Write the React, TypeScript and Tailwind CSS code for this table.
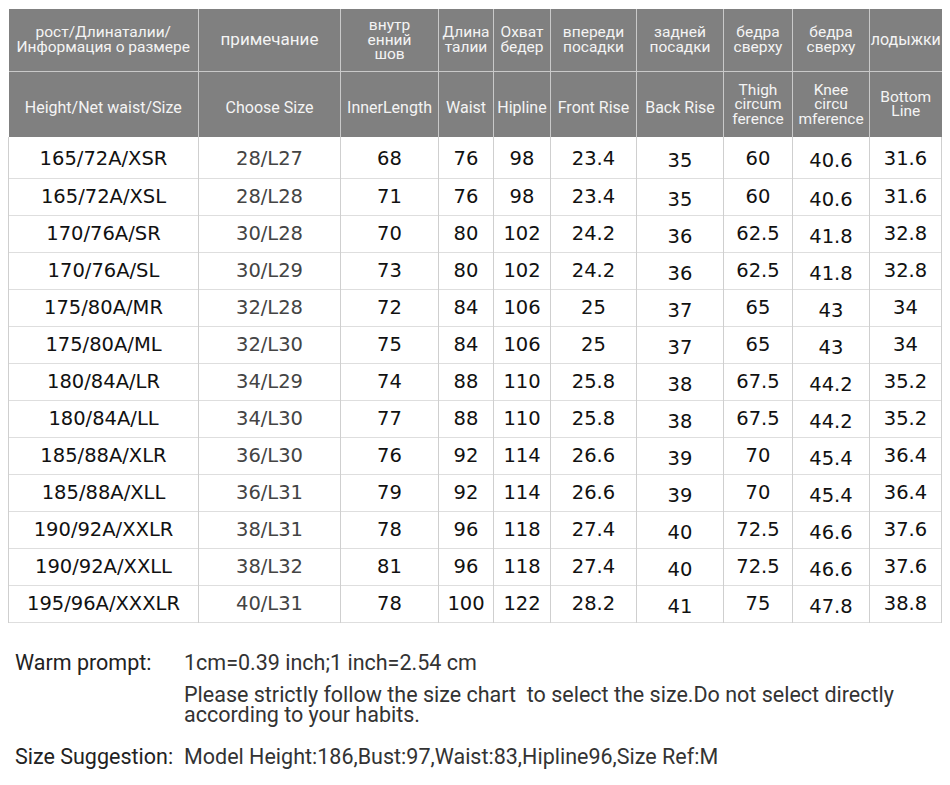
import React from "react";

const rows: string[][] = [
  ["165/72A/XSR", "28/L27", "68", "76", "98", "23.4", "35", "60", "40.6", "31.6"],
  ["165/72A/XSL", "28/L28", "71", "76", "98", "23.4", "35", "60", "40.6", "31.6"],
  ["170/76A/SR", "30/L28", "70", "80", "102", "24.2", "36", "62.5", "41.8", "32.8"],
  ["170/76A/SL", "30/L29", "73", "80", "102", "24.2", "36", "62.5", "41.8", "32.8"],
  ["175/80A/MR", "32/L28", "72", "84", "106", "25", "37", "65", "43", "34"],
  ["175/80A/ML", "32/L30", "75", "84", "106", "25", "37", "65", "43", "34"],
  ["180/84A/LR", "34/L29", "74", "88", "110", "25.8", "38", "67.5", "44.2", "35.2"],
  ["180/84A/LL", "34/L30", "77", "88", "110", "25.8", "38", "67.5", "44.2", "35.2"],
  ["185/88A/XLR", "36/L30", "76", "92", "114", "26.6", "39", "70", "45.4", "36.4"],
  ["185/88A/XLL", "36/L31", "79", "92", "114", "26.6", "39", "70", "45.4", "36.4"],
  ["190/92A/XXLR", "38/L31", "78", "96", "118", "27.4", "40", "72.5", "46.6", "37.6"],
  ["190/92A/XXLL", "38/L32", "81", "96", "118", "27.4", "40", "72.5", "46.6", "37.6"],
  ["195/96A/XXXLR", "40/L31", "78", "100", "122", "28.2", "41", "75", "47.8", "38.8"],
];

const widths = [190, 142, 98, 55, 57, 86, 87, 69, 77, 72];

const head1: string[][] = [
  ["рост/Длинаталии/", "Информация о размере"],
  ["примечание"],
  ["внутр", "енний", "шов"],
  ["Длина", "талии"],
  ["Охват", "бедер"],
  ["впереди", "посадки"],
  ["задней", "посадки"],
  ["бедра", "сверху"],
  ["бедра", "сверху"],
  ["лодыжки"],
];

const head2: string[][] = [
  ["Height/Net waist/Size"],
  ["Choose Size"],
  ["InnerLength"],
  ["Waist"],
  ["Hipline"],
  ["Front Rise"],
  ["Back Rise"],
  ["Thigh", "circum", "ference"],
  ["Knee", "circu", "mference"],
  ["Bottom", "Line"],
];

const cellPad = ["pt-0", "pt-0", "pt-0", "pt-0", "pt-0", "pt-0", "pt-[6px]", "pt-0", "pt-[6px]", "pt-0"];
const firstPad = ["pt-[3px]", "pt-[3px]", "pt-[3px]", "pt-[3px]", "pt-[3px]", "pt-[3px]", "pt-[8px]", "pt-[3px]", "pt-[8px]", "pt-[3px]"];

function HeadCell({ lines, big, last, low }: { lines: string[]; big?: boolean; last?: boolean; low?: boolean }) {
  const multi = lines.length > 1;
  return (
    <th
      className={`p-0 font-normal text-[#f4f4f4] text-center align-middle ${last ? "" : "border-r border-[#c9c9c9]"} ${
        big ? "text-[17px] leading-[17px]" : multi ? "text-[15.5px] leading-[14.5px]" : "text-[16px] leading-[17px]"
      } ${low && !multi ? "pt-[6px]" : ""}`}
    >
      {lines.map((l, i) => (
        <div key={i} className="whitespace-nowrap">
          {l}
        </div>
      ))}
    </th>
  );
}

export default function App() {
  return (
    <div className="w-[950px] h-[785px] bg-white pt-[9px] pl-[8px]" style={{ fontFamily: "Roboto, 'Noto Sans', sans-serif" }}>
      <table className="table-fixed border-collapse w-[933px]">
        <colgroup>
          {widths.map((w, i) => (
            <col key={i} style={{ width: w }} />
          ))}
        </colgroup>
        <thead className="bg-[#808080]">
          <tr className="h-[62px]">
            {head1.map((l, i) => (
              <HeadCell key={i} lines={l} big={i === 1} last={i === 9} />
            ))}
          </tr>
          <tr className="h-[66px] border-t border-[#c9c9c9]">
            {head2.map((l, i) => (
              <HeadCell key={i} lines={l} last={i === 9} low />
            ))}
          </tr>
        </thead>
        <tbody style={{ fontFamily: "'DejaVu Sans', 'Noto Sans', sans-serif" }}>
          {rows.map((r, ri) => (
            <tr key={ri} className={`${ri === 0 ? "h-[41px]" : "h-[37px]"} border-b border-[#dedede]`}>
              {r.map((c, ci) => (
                <td
                  key={ci}
                  className={`p-0 text-center align-middle text-[19.5px] leading-[20px] border-r border-[#cfcfcf] ${
                    ci === 0 ? "border-l text-[#111]" : ci === 1 ? "text-[#444]" : "text-[#111]"
                  } ${ri === 0 ? firstPad[ci] : cellPad[ci]}`}
                >
                  {c}
                </td>
              ))}
            </tr>
          ))}
        </tbody>
      </table>

      <div className="mt-[30px] pl-[7px] text-[21.5px] text-[#333] leading-[20px]" style={{ fontFamily: "Roboto, sans-serif" }}>
        <div className="flex">
          <div className="w-[169px] shrink-0 text-[#222]">Warm prompt:</div>
          <div>1cm=0.39 inch;1 inch=2.54 cm</div>
        </div>
        <div className="flex mt-[12px]">
          <div className="w-[169px] shrink-0"></div>
          <div className="whitespace-pre">
            {"Please strictly follow the size chart  to select the size.Do not select directly"}
            <br />
            {"according to your habits."}
          </div>
        </div>
        <div className="flex mt-[22px]">
          <div className="w-[169px] shrink-0 text-[#222]">Size Suggestion:</div>
          <div>Model Height:186,Bust:97,Waist:83,Hipline96,Size Ref:M</div>
        </div>
      </div>
    </div>
  );
}
